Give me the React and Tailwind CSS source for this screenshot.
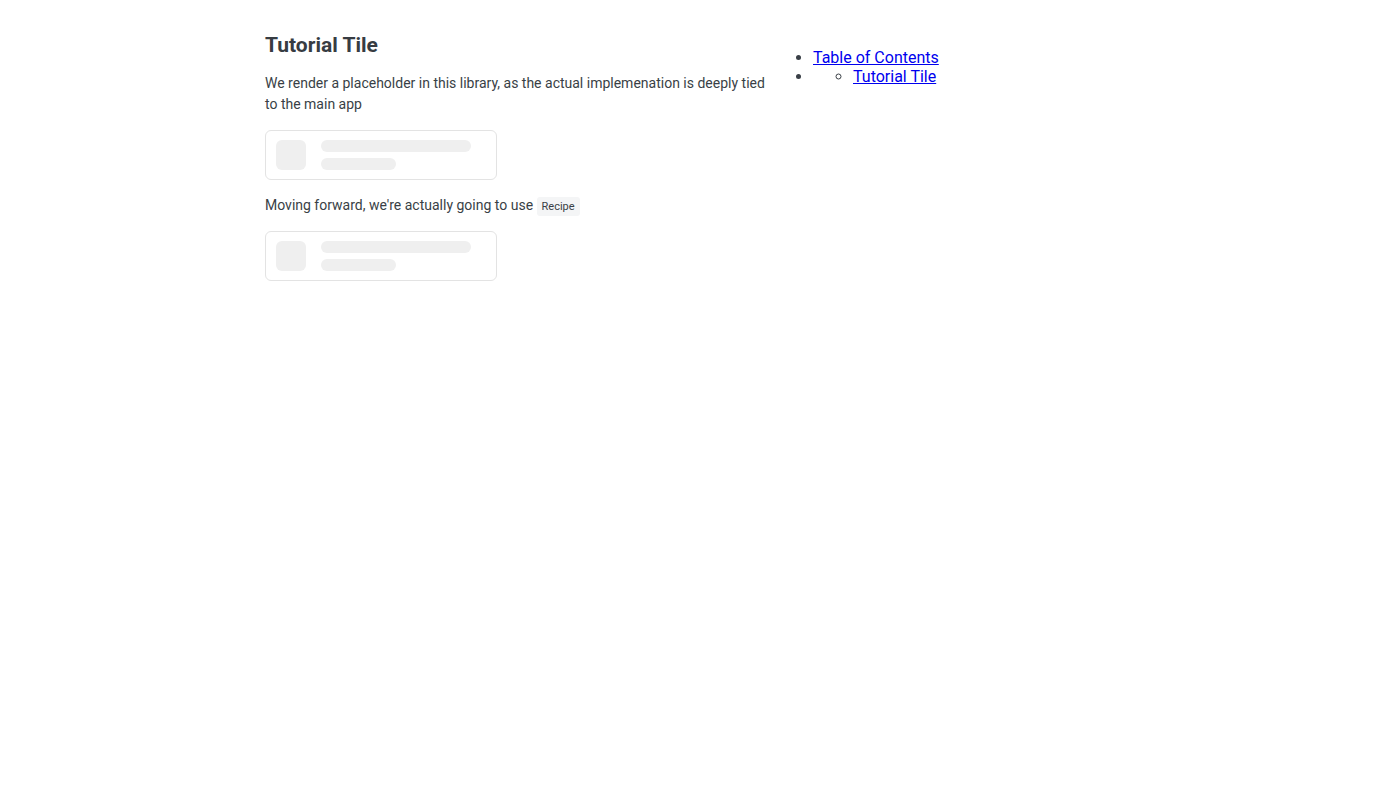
export default function App() {
  const Card = () => (
    <div className="flex w-[232px] h-[50px] items-center gap-[15px] rounded-[6px] border border-[#e3e3e3] bg-white px-[10px]">
      <div className="h-[30px] w-[30px] rounded-[6px] bg-[#efefef]" />
      <div className="flex flex-col gap-[6px]">
        <div className="h-[12px] w-[150px] rounded-full bg-[#efefef]" />
        <div className="h-[12px] w-[75px] rounded-full bg-[#efefef]" />
      </div>
    </div>
  );
  return (
    <div className="min-h-[800px] bg-white font-['Roboto',sans-serif] text-[#393f46]">
      <div className="flex items-start gap-[8px] pl-[265px] pt-[32px]">
        <div className="w-[500px]">
          <h1 className="text-[21px] font-bold leading-[26px] text-[#373c42]">Tutorial Tile</h1>
          <p className="mt-[15px] text-[14px] leading-[21px]">
            We render a placeholder in this library, as the actual implemenation is deeply tied to the main app
          </p>
          <div className="mt-[15px]">
            <Card />
          </div>
          <p className="mt-[15px] text-[14px] leading-[21px]">
            Moving forward, we're actually going to use{" "}
            <code className="rounded-[3px] bg-[#f4f5f6] px-[5px] py-[3px] font-['Roboto',sans-serif] text-[11px]">Recipe</code>
          </p>
          <div className="mt-[14px]">
            <Card />
          </div>
        </div>
        <ul className="mt-[16px] list-disc pl-10 text-[16px] leading-[19px] text-[#393f46]">
          <li>
            <a href="#" className="text-[#0000ee] underline">Table of Contents</a>
          </li>
          <li>
            <ul className="list-[circle] pl-10">
              <li>
                <a href="#" className="text-[#0000ee] underline">Tutorial Tile</a>
              </li>
            </ul>
          </li>
        </ul>
      </div>
    </div>
  );
}
